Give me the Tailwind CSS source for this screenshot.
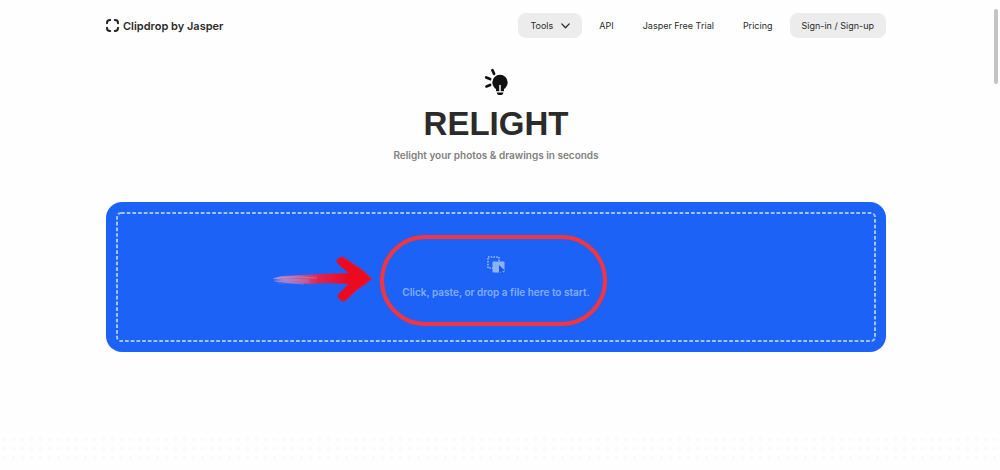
<!DOCTYPE html>
<html lang="en">
<head>
<meta charset="utf-8">
<meta name="viewport" content="width=device-width, initial-scale=1">
<title>Relight - Clipdrop by Jasper</title>
<script src="https://cdn.jsdelivr.net/npm/@tailwindcss/browser@4"></script>
</head>
<body class="relative flex min-h-screen flex-col overflow-x-hidden bg-[#fefefe] pr-2 font-['Inter',sans-serif] text-[#2b2b2b]">
  <div class="mx-auto w-full max-w-[780px]">
    <header class="flex items-center justify-between pt-[13px]">
      <a href="#" class="flex items-center gap-1 text-[11px] leading-4 font-semibold">
        <svg class="size-[13px]" viewBox="0 0 13 13" fill="none" stroke="#222" stroke-width="2" stroke-linecap="round" aria-hidden="true">
          <path d="M1 4.2V4a3 3 0 0 1 3-3h.2M8.800 1H9a3 3 0 0 1 3 3v.2M12 8.800V9a3 3 0 0 1-3 3h-.2M4.200 12H4a3 3 0 0 1-3-3v-.2"/>
        </svg>
        Clipdrop by Jasper
      </a>
      <nav class="flex items-center gap-[5px] text-[9px] leading-4">
        <button type="button" class="flex h-[25px] items-center gap-2 rounded-lg bg-[#ececec] px-3">
          Tools
          <svg class="h-[6px] w-[9px]" viewBox="0 0 9 6" fill="none" stroke="#2b2b2b" stroke-width="1.300" stroke-linecap="round" stroke-linejoin="round" aria-hidden="true"><path d="M.8.900 4.500 4.800 8.200.900"/></svg>
        </button>
        <a href="#" class="px-3">API</a>
        <a href="#" class="px-3">Jasper Free Trial</a>
        <a href="#" class="px-3">Pricing</a>
        <a href="#" class="flex h-[25px] items-center rounded-lg bg-[#ececec] px-3">Sign-in / Sign-up</a>
      </nav>
    </header>

    <main class="pt-[30px]">
      <div class="flex flex-col items-center">
        <svg class="h-7 w-6" viewBox="0 0 24 28" aria-hidden="true">
          <circle cx="16" cy="14.500" r="7.700" fill="#111"/>
          <path d="M12 19h8v4.200h-8z" fill="#111"/>
          <path d="M16 17.500v5.700" stroke="#fefefe" stroke-width="1.500" stroke-linecap="round"/>
          <path d="M12.900 24.500h6.400v.6a1.800 1.800 0 0 1-1.800 1.800h-2.800a1.800 1.800 0 0 1-1.800-1.800z" fill="#111"/>
          <path d="M8.400 2.200l1.700 3.600M2.200 9.400l3.900 1.700M2.500 18.400l3.600-1.500" fill="none" stroke="#111" stroke-width="2.700" stroke-linecap="round"/>
        </svg>
        <h1 class="mt-2 font-['Liberation_Sans',sans-serif] text-[33px] leading-10 font-bold">RELIGHT</h1>
        <p class="mt-[3px] text-[10px] leading-4 font-semibold text-[#808080]">Relight your photos &amp; drawings in seconds</p>
      </div>

      <div class="relative mt-[39px]">
        <label for="photo" class="relative flex h-[150px] cursor-pointer flex-col items-center justify-center gap-[10px] rounded-2xl bg-[#1d62f6] text-[10px] leading-4 font-semibold text-[#82adfb]">
          <input id="photo" type="file" accept="image/*" class="sr-only">
          <svg class="absolute inset-[11px] h-[calc(100%-22px)] w-[calc(100%-22px)] overflow-visible" fill="none" aria-hidden="true">
            <rect width="100%" height="100%" rx="4" stroke="#a3c6ff" stroke-width="2" stroke-dasharray="3.700 2"/>
          </svg>
          <svg class="mt-[2px] size-[18px]" viewBox="0 0 18 18" aria-hidden="true">
            <path d="M1 1h11v11H1z" fill="none" stroke="#9dc0fc" stroke-width="1.500" stroke-dasharray="1.500 1.250"/>
            <path d="M6.500 5.500h10a1 1 0 0 1 1 1v9a1 1 0 0 1-1 1h-10a1 1 0 0 1-1-1v-9a1 1 0 0 1 1-1z" fill="#8bb3fc"/>
            <path d="M12 9v8.200l1.900-1.700 1.100 2.500 1.500-.7-1.100-2.300 2.600-.3z" fill="#1d58dc"/>
          </svg>
          Click, paste, or drop a file here to start.
        </label>
        <div class="pointer-events-none absolute top-[33px] left-1/2 ml-[-116px] h-[91px] w-[227px] rounded-[46px] border-4 border-[#f4343f]"></div>
        <svg class="pointer-events-none absolute top-[52px] left-1/2 -ml-[224px] h-[50px] w-[101px]" viewBox="0 0 101 50" aria-hidden="true">
          <defs>
            <linearGradient id="brush" gradientUnits="userSpaceOnUse" x1="0" y1="0" x2="76" y2="0">
              <stop offset="0" stop-color="#c9a0d8" stop-opacity=".7"/>
              <stop offset=".3" stop-color="#c96aa0" stop-opacity=".85"/>
              <stop offset=".6" stop-color="#dd2750"/>
              <stop offset="1" stop-color="#ec0820"/>
            </linearGradient>
          </defs>
          <path d="M2 24 10 22l20-1 18-1 32-1v11l-26-1-16 1-22-1-15-2 9-1-9-1z" fill="url(#brush)"/>
          <path d="M3 27l14 1 20 0M6 29l10 0 16 1" stroke="#a68be0" stroke-width=".7" fill="none" opacity=".8"/>
          <path d="M5 24l20-1 20 1M12 26l25 0" stroke="#e7a2c4" stroke-width=".6" fill="none" opacity=".7"/>
          <path d="M65 9 64.500 6l5-3.500 2 .5L87 13.500 93 18l7 7-8 6.500-7 4.500-11.500 11-3 .5-5-4 .5-3L77 29.500V19.500z" fill="#ec0a21"/>
          <path d="M69.500 2.800l17.500 11 12.500 11-14 10.500-12 11.500" fill="none" stroke="#c53a78" stroke-width=".8" stroke-dasharray="2 1" opacity=".7"/>
        </svg>
      </div>
    </main>
  </div>

  <div class="mt-auto -mr-2 mb-2 h-[27px] bg-[radial-gradient(circle,#f6f6f6_1px,transparent_2px)] bg-[size:9px_9px] opacity-60" aria-hidden="true"></div>
  <div class="absolute top-[9px] right-[2px] h-[75px] w-1 rounded-full bg-[#c4c4c4]" aria-hidden="true"></div>
</body>
</html>
